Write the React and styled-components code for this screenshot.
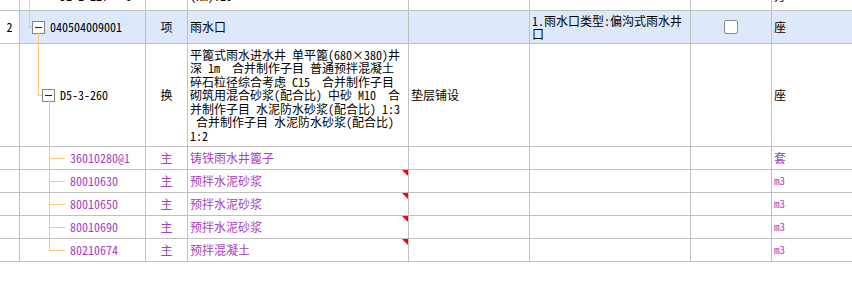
import React from "react";
import styled, { createGlobalStyle } from "styled-components";

const Global = createGlobalStyle`
  html, body { margin: 0; padding: 0; background: #fff; }
  body {
    font-family: "Noto Sans Mono CJK SC", "Noto Sans CJK SC", sans-serif;
    font-size: 12px;
    color: #000;
    overflow: hidden;
  }
`;

const GRID = "20px 126px 42px 221px 121px 161px 81px 1fr";
const LINE = "#c0c0c0";
const TREE = "#ffc875";
const PURPLE = "#a83fc0";

const Sheet = styled.div`
  width: 852px;
  margin-top: -20px;
`;

const Row = styled.div`
  display: grid;
  grid-template-columns: ${GRID};
  height: ${(p) => p.$h}px;
`;

const Cell = styled.div`
  box-sizing: border-box;
  border-right: ${(p) => (p.$last ? "none" : `1px solid ${LINE}`)};
  border-bottom: 1px solid ${LINE};
  background: ${(p) => (p.$hl ? "#dde8fb" : "#fff")};
  display: flex;
  align-items: ${(p) => (p.$bottom ? "flex-end" : "center")};
  justify-content: ${(p) => (p.$center ? "center" : "flex-start")};
  padding: ${(p) => (p.$bottom ? "0 2px 8px 2px" : "0 2px")};
  line-height: 13.5px;
  color: ${(p) => (p.$purple ? PURPLE : "#000")};
  position: relative;
  white-space: pre;
  overflow: hidden;
`;

const TreeCell = styled(Cell)`
  padding-left: ${(p) => p.$indent}px;
`;

const VLine = styled.span`
  position: absolute;
  left: ${(p) => p.$x}px;
  top: ${(p) => (p.$top ? `${p.$top}px` : "0")};
  bottom: ${(p) => (p.$toMid ? "50%" : "-1px")};
  width: 1px;
  background: ${TREE};
`;

const HLine = styled.span`
  position: absolute;
  left: ${(p) => p.$x}px;
  width: ${(p) => p.$w}px;
  top: 50%;
  height: 1px;
  background: ${TREE};
`;

const Toggle = styled.span`
  position: absolute;
  left: ${(p) => p.$x}px;
  top: calc(50% - 6px);
  box-sizing: border-box;
  width: 13px;
  height: 13px;
  border: 1px solid #858585;
  background: #fff;
  &::after {
    content: "";
    position: absolute;
    left: 2px;
    right: 2px;
    top: 5px;
    height: 1px;
    background: #222;
  }
`;

const Check = styled.span`
  box-sizing: border-box;
  width: 14px;
  height: 14px;
  border: 1px solid #8c8c8c;
  border-radius: 2px;
  background: #fff;
`;

const Flag = styled.span`
  position: absolute;
  top: 0;
  right: 0;
  width: 0;
  height: 0;
  border-top: 6px solid #ff0000;
  border-left: 6px solid transparent;
`;

const Small = styled.span`
  font-size: 11px;
`;

const DescText = styled.div`
  white-space: pre;
  line-height: 13.5px;
`;

const children = [
  { code: "36010280@1", name: "铸铁雨水井篦子", unit: "套", flag: false },
  { code: "80010630", name: "预拌水泥砂浆", unit: "m3", flag: true },
  { code: "80010650", name: "预拌水泥砂浆", unit: "m3", flag: true },
  { code: "80010690", name: "预拌水泥砂浆", unit: "m3", flag: true },
  { code: "80210674", name: "预拌混凝土", unit: "m3", flag: true },
];

const desc = [
  "平篦式雨水进水井 单平篦(680×380)井",
  "深 1m  合并制作子目 普通预拌混凝土",
  "碎石粒径综合考虑 C15  合并制作子目",
  "砌筑用混合砂浆(配合比) 中砂 M10  合",
  "并制作子目 水泥防水砂浆(配合比) 1:3",
  " 合并制作子目 水泥防水砂浆(配合比)",
  "1:2",
];

export default function App() {
  return (
    <>
      <Global />
      <Sheet>
        <Row $h={31}>
          <Cell $bottom />
          <TreeCell $bottom $indent={40}>
            <VLine $x={9} />
            D1-1-127 * 9
          </TreeCell>
          <Cell $bottom />
          <Cell $bottom>(km):10</Cell>
          <Cell $bottom />
          <Cell $bottom />
          <Cell $bottom />
          <Cell $bottom $last>方</Cell>
        </Row>

        <Row $h={33}>
          <Cell $center>2</Cell>
          <TreeCell $hl $indent={30}>
            <VLine $x={9} $toMid />
            <HLine $x={9} $w={4} />
            <Toggle $x={12} />
            <VLine $x={18} $top={22} />
            040504009001
          </TreeCell>
          <Cell $hl $center>项</Cell>
          <Cell $hl>雨水口</Cell>
          <Cell $hl />
          <Cell $hl>
            <DescText>{"1.雨水口类型:偏沟式雨水井\n口"}</DescText>
          </Cell>
          <Cell $hl $center>
            <Check />
          </Cell>
          <Cell $hl $last>座</Cell>
        </Row>

        <Row $h={103}>
          <Cell />
          <TreeCell $indent={40}>
            <VLine $x={18} $toMid />
            <HLine $x={18} $w={5} />
            <Toggle $x={22} />
            <VLine $x={29} $top={57} />
            D5-3-260
          </TreeCell>
          <Cell $center>换</Cell>
          <Cell>
            <DescText>{desc.join("\n")}</DescText>
          </Cell>
          <Cell>垫层铺设</Cell>
          <Cell />
          <Cell />
          <Cell $last>座</Cell>
        </Row>

        {children.map((c, i) => (
          <Row $h={23} key={c.code}>
            <Cell />
            <TreeCell $purple $indent={50}>
              <VLine $x={29} $toMid={i === children.length - 1} />
              <HLine $x={29} $w={16} />
              {c.code}
            </TreeCell>
            <Cell $purple $center>主</Cell>
            <Cell $purple>
              {c.name}
              {c.flag && <Flag />}
            </Cell>
            <Cell />
            <Cell />
            <Cell />
            <Cell $purple $last>
              {c.unit === "m3" ? <Small>m3</Small> : c.unit}
            </Cell>
          </Row>
        ))}
      </Sheet>
    </>
  );
}
